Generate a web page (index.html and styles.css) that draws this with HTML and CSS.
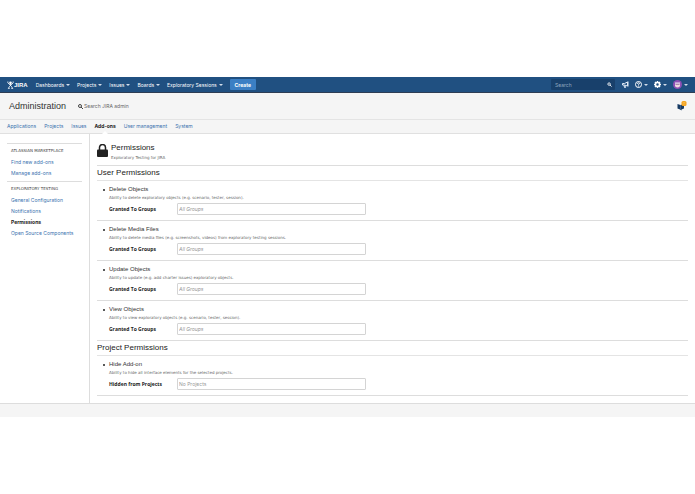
FILE: index.html
```html
<!DOCTYPE html>
<html lang="en">
<head>
  <meta charset="UTF-8" />
  <title>Permissions - JIRA Administration</title>
  <link rel="stylesheet" href="styles.css">
</head>
<body>
  <header class="topbar">
    <a class="logo" href="#" aria-label="JIRA home">
      <svg width="7" height="8" viewBox="0 0 16 18" fill="none" stroke="#fff" stroke-width="2">
        <circle cx="8" cy="4" r="3" fill="#fff" stroke="none"/>
        <path d="M2 1v3l4 4h4l4-4V1M6 8l4 4 3 5M10 8l-4 4-3 5M3 17h3M10 17h3"/>
      </svg>
      <span>JIRA</span>
    </a>
    <nav class="menu">
      <a class="drop" href="#">Dashboards</a>
      <a class="drop" href="#">Projects</a>
      <a class="drop" href="#">Issues</a>
      <a class="drop" href="#">Boards</a>
      <a class="drop" href="#">Exploratory Sessions</a>
    </nav>
    <button class="create" type="button">Create</button>
    <form class="quicksearch">
      <input type="text" placeholder="Search" aria-label="Search">
      <svg width="5" height="5" viewBox="0 0 12 12" fill="none" stroke="#fff" stroke-width="2"><circle cx="5" cy="5" r="3"/><path d="M7 7l4 4"/></svg>
    </form>
    <div class="tools">
      <a class="tool" href="#" aria-label="Feedback">
        <svg width="7" height="7" viewBox="0 0 14 14" fill="none" stroke="#dfe9f5" stroke-width="2"><path d="M1 5h4l6-3v8L5 8H1zM4 8l1 5h2L6 9M12 1v10"/></svg>
      </a>
      <a class="tool drop" href="#" aria-label="Help">
        <svg width="7" height="7" viewBox="0 0 14 14" fill="none" stroke="#fff" stroke-width="2"><circle cx="7" cy="7" r="6"/><path d="M5 6c0-3 4-3 4-1 0 1-2 1-2 3M7 9v2"/></svg>
      </a>
      <a class="tool drop" href="#" aria-label="Settings">
        <svg width="7" height="7" viewBox="0 0 14 14" fill="none" stroke="#fff"><circle cx="7" cy="7" r="4" stroke-width="3"/><path d="M7 0v3M7 11v3M0 7h3M11 7h3M2 2l2 2M10 10l2 2M12 2l-2 2M4 10l-2 2" stroke-width="3"/></svg>
      </a>
      <a class="tool drop" href="#" aria-label="Profile">
        <svg width="9" height="9" viewBox="0 0 18 18"><circle cx="9" cy="9" r="9" fill="#8e4fb5"/><path d="M4 7h10v4a5 4 0 0 1-10 0z" fill="#f1d9e0"/><path d="M4 5h10v2H4z" fill="#e9e4f2"/><path d="M5 8h8v1H5z" fill="#5c3a75"/></svg>
      </a>
    </div>
  </header>

  <div class="admin-header">
    <h1>Administration</h1>
    <label class="admin-search">
      <svg width="5" height="5" viewBox="0 0 10 10" fill="none" stroke="#444" stroke-width="2"><circle cx="4" cy="4" r="3"/><path d="M6 6l4 4"/></svg>
      <input type="text" placeholder="Search JIRA admin" aria-label="Search JIRA admin">
    </label>
    <a class="notice" href="#" aria-label="Announcements">
      <svg width="10" height="10" viewBox="0 0 20 20"><path d="M1 6l6 2 7-2v9l-5 2v2l-3-2-5-2z" fill="#173a63"/><path d="M7 8v8" stroke="#6485ad"/><rect x="9" y="0" width="10" height="10" rx="3" fill="#f5a623"/><path d="M14 2v3M14 6v1" stroke="#fce0a8"/></svg>
    </a>
  </div>

  <nav class="tabs">
    <a href="#">Applications</a>
    <a href="#">Projects</a>
    <a href="#">Issues</a>
    <a href="#" class="active">Add-ons</a>
    <a href="#">User management</a>
    <a href="#">System</a>
  </nav>

  <div class="content">
    <aside class="sidebar">
      <section>
        <h2>ATLASSIAN MARKETPLACE</h2>
        <a href="#">Find new add-ons</a>
        <a href="#">Manage add-ons</a>
      </section>
      <section>
        <h2>EXPLORATORY TESTING</h2>
        <a href="#">General Configuration</a>
        <a href="#">Notifications</a>
        <a href="#" class="active">Permissions</a>
        <a href="#">Open Source Components</a>
      </section>
    </aside>

    <main>
      <div class="page-title">
        <svg width="11" height="13" viewBox="0 0 22 26"><path d="M5 12V7a6 6 0 0 1 12 0v5" fill="none" stroke="#222" stroke-width="3"/><rect x="0" y="11" width="22" height="15" rx="2" fill="#222"/></svg>
        <div>
          <h2>Permissions</h2>
          <p>Exploratory Testing for JIRA</p>
        </div>
      </div>

      <h3>User Permissions</h3>
      <ul>
        <li>
          <h4>Delete Objects</h4>
          <p>Ability to delete exploratory objects (e.g. scenario, tester, session).</p>
          <div class="field">
            <label for="deleteObjects">Granted To Groups</label>
            <input type="text" id="deleteObjects" placeholder="All Groups">
          </div>
        </li>
        <li>
          <h4>Delete Media Files</h4>
          <p>Ability to delete media files (e.g. screenshots, videos) from exploratory testing sessions.</p>
          <div class="field">
            <label for="deleteMedia">Granted To Groups</label>
            <input type="text" id="deleteMedia" placeholder="All Groups">
          </div>
        </li>
        <li>
          <h4>Update Objects</h4>
          <p>Ability to update (e.g. add charter issues) exploratory objects.</p>
          <div class="field">
            <label for="updateObjects">Granted To Groups</label>
            <input type="text" id="updateObjects" placeholder="All Groups">
          </div>
        </li>
        <li>
          <h4>View Objects</h4>
          <p>Ability to view exploratory objects (e.g. scenario, tester, session).</p>
          <div class="field">
            <label for="viewObjects">Granted To Groups</label>
            <input type="text" id="viewObjects" placeholder="All Groups">
          </div>
        </li>
      </ul>

      <h3>Project Permissions</h3>
      <ul>
        <li>
          <h4>Hide Add-on</h4>
          <p>Ability to hide all interface elements for the selected projects.</p>
          <div class="field">
            <label for="hideAddon">Hidden from Projects</label>
            <input class="upright" type="text" id="hideAddon" placeholder="No Projects">
          </div>
        </li>
      </ul>
    </main>
  </div>

  <footer></footer>
</body>
</html>
```

FILE: styles.css
```css
* {
  box-sizing: border-box;
}

body {
  margin: 0;
  padding: 77px 0;
  background: #fff;
  color: #333;
  font-family: Inter, "Liberation Sans", Arial, sans-serif;
  font-size: 5px;
  line-height: 8px;
}

h1, h2, h3, h4, p, ul {
  margin: 0;
  padding: 0;
  font-weight: normal;
}

h1, h2, h3, h4 {
  font-family: "Liberation Sans", Arial, sans-serif;
}

a {
  color: #3b73af;
  text-decoration: none;
}

input, button {
  font: inherit;
  color: inherit;
  min-width: 0;
}

svg {
  display: block;
  flex: none;
}

/* top bar */
.topbar {
  display: flex;
  align-items: center;
  height: 16px;
  padding: 0 7px;
  background: #205081;
  border-bottom: 1px solid #2e3d54;
}

.topbar a {
  color: #fff;
}

.logo {
  display: flex;
  align-items: center;
  margin-right: 8px;
  font-family: "Liberation Sans", Arial, sans-serif;
  font-size: 6px;
  font-weight: bold;
}

.menu {
  display: flex;
  gap: 7px;
}

.drop {
  display: flex;
  align-items: center;
  gap: 2px;
}

.drop::after {
  content: "";
  border: 2px solid transparent;
  border-top-color: #d3deeb;
  border-bottom: 0;
}

.create {
  width: 26px;
  height: 11px;
  margin-left: 7px;
  padding: 0;
  border: 0;
  border-radius: 1px;
  background: #3b7fc4;
  color: #fff;
  font-weight: bold;
}

.quicksearch {
  display: flex;
  align-items: center;
  width: 64px;
  height: 11px;
  margin-left: auto;
  padding: 0 3px 0 4px;
  border-radius: 1px;
  background: #18406b;
}

.quicksearch input {
  flex: 1;
  padding: 0;
  border: 0;
  background: none;
  color: #fff;
}

.quicksearch input::placeholder {
  color: #8fa6bf;
}

.tools {
  display: flex;
  align-items: center;
  gap: 6px;
  margin-left: 7px;
}

/* administration header */
.admin-header {
  display: flex;
  align-items: center;
  height: 27px;
  padding: 0 8px 0 9px;
  background: #f5f5f5;
  border-bottom: 1px solid #e4e4e4;
}

.admin-header h1 {
  font-size: 9px;
  line-height: 12px;
}

.admin-search {
  display: flex;
  align-items: center;
  gap: 1px;
  margin-left: 12px;
}

.admin-search input {
  width: 80px;
  padding: 0;
  border: 0;
  background: none;
}

.admin-search input::placeholder {
  color: #666;
}

.notice {
  margin-left: auto;
}

.tabs {
  display: flex;
  gap: 8px;
  height: 14px;
  padding: 0 7px;
  background: #f5f5f5;
  border-bottom: 1px solid #e0e0e0;
  line-height: 13px;
}

.tabs .active {
  position: relative;
  color: #222;
  font-weight: bold;
}

.tabs .active::after {
  content: "";
  position: absolute;
  left: 50%;
  bottom: -1px;
  margin-left: -3px;
  border: 3px solid transparent;
  border-top: 0;
  border-bottom-color: #fff;
}

/* sidebar */
.content {
  display: flex;
}

.sidebar {
  width: 90px;
  padding: 9px 7px 0;
  border-right: 1px solid #ddd;
}

.sidebar section {
  padding: 3px 4px 2px;
  border-top: 1px solid #ddd;
}

.sidebar h2 {
  margin-bottom: 2px;
  color: #444;
  font-family: "DejaVu Sans", Verdana, sans-serif;
  font-size: 4px;
  line-height: 8px;
  white-space: nowrap;
}

.sidebar a {
  display: block;
  line-height: 11px;
  white-space: nowrap;
}

.sidebar .active {
  color: #222;
  font-weight: bold;
}

/* permissions */
main {
  flex: 1;
  padding: 7px;
}

main p {
  color: #666;
  font-family: "DejaVu Sans", Verdana, sans-serif;
  font-size: 4px;
  line-height: 7px;
}

.page-title {
  display: flex;
  gap: 3px;
  height: 25px;
  border-bottom: 1px solid #ddd;
}

.page-title svg {
  margin-top: 3px;
}

.page-title h2 {
  color: #222;
  font-size: 8px;
  line-height: 13px;
}

main h3 {
  color: #222;
  font-size: 8px;
  line-height: 14px;
}

main ul {
  list-style: none;
  border-top: 1px solid #e4e4e4;
}

main li {
  height: 40px;
  padding: 4px 0 0 12px;
  border-bottom: 1px solid #ddd;
}

main h4 {
  position: relative;
  font-size: 6px;
  line-height: 9px;
}

main h4::before {
  content: "";
  position: absolute;
  top: 4px;
  left: -6px;
  width: 2px;
  height: 2px;
  border-radius: 50%;
  background: #222;
}

.field {
  display: flex;
  align-items: center;
  margin-top: 2px;
}

.field label {
  width: 68px;
  color: #222;
  font-family: "Open Sans", "Liberation Sans", Arial, sans-serif;
  font-weight: bold;
}

.field input {
  width: 189px;
  height: 12px;
  padding: 0 1px;
  border: 1px solid #d4d4d4;
  border-radius: 1px;
}

.field input::placeholder {
  color: #999;
  font-style: italic;
}

.field .upright::placeholder {
  font-style: normal;
}

footer {
  height: 14px;
  background: #f5f5f5;
  border-top: 1px solid #ddd;
}
```
